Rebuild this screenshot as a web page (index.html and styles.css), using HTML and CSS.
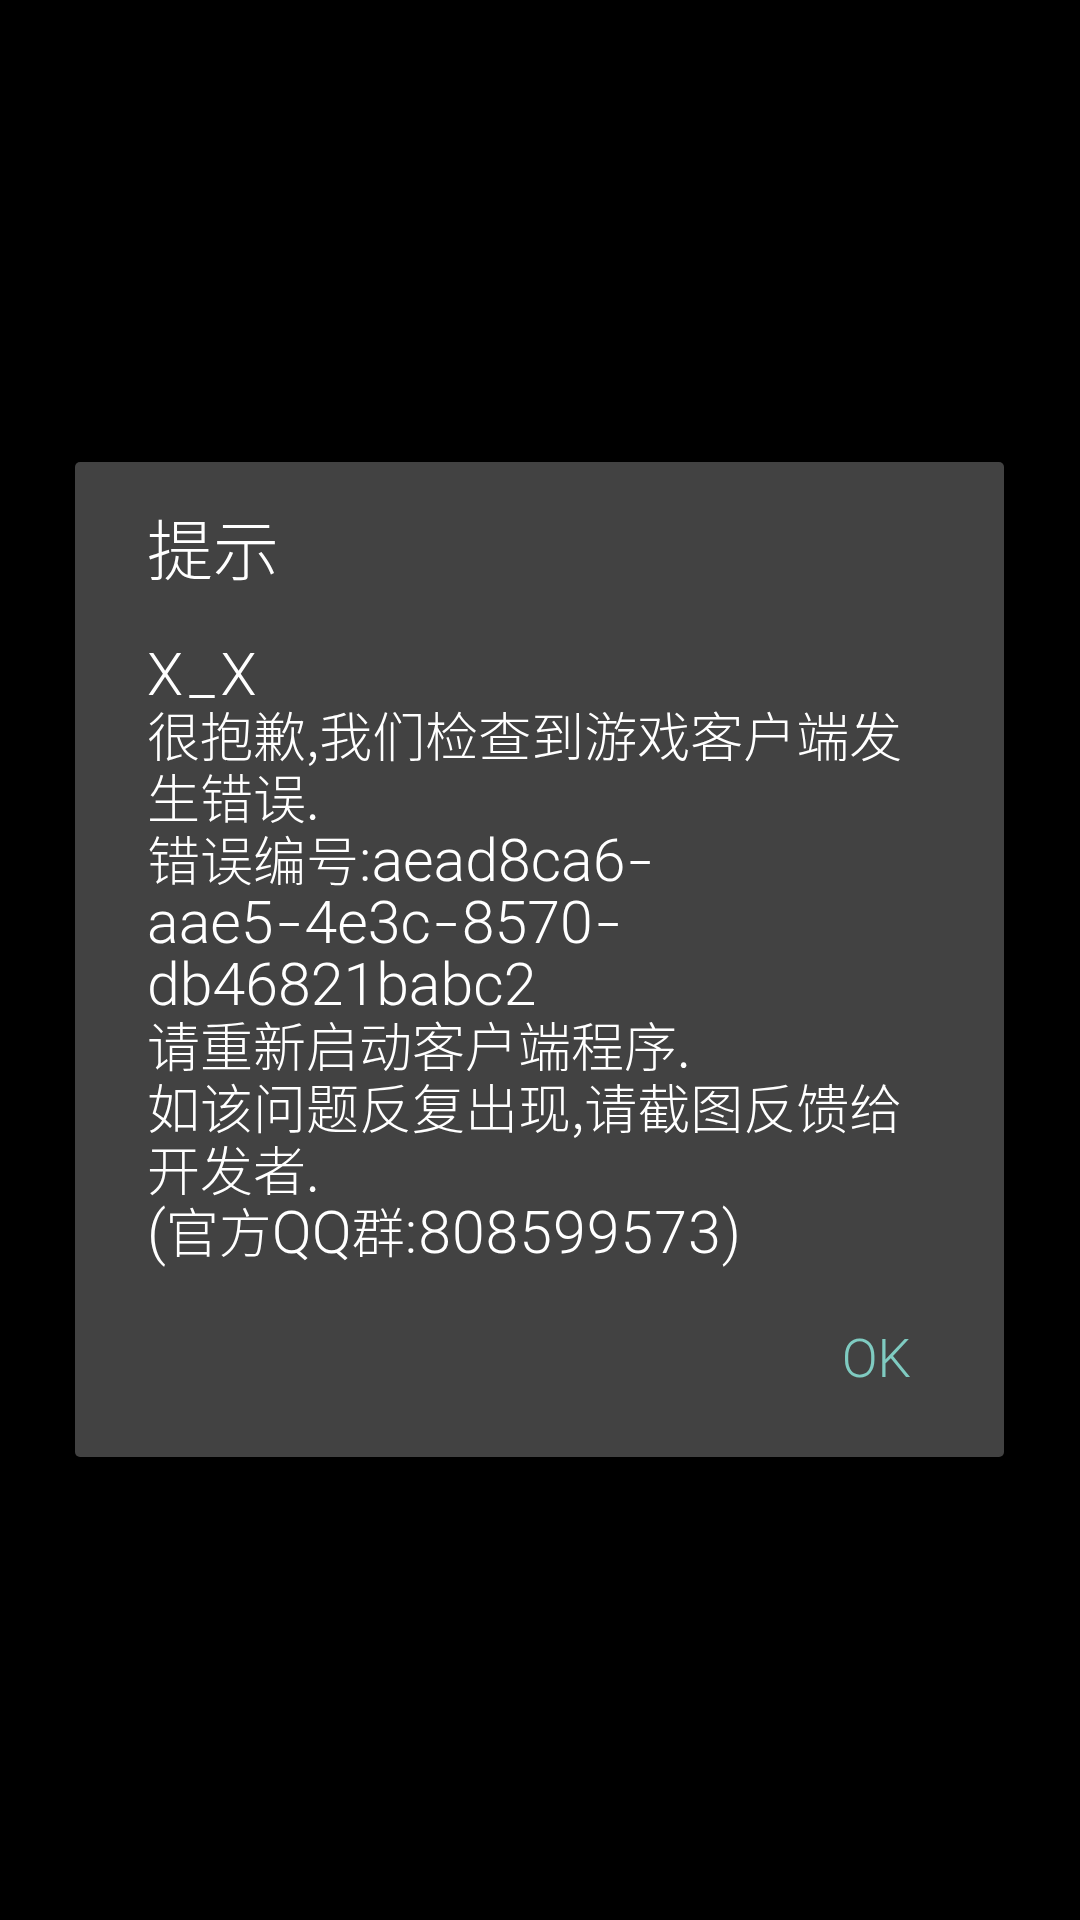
FILE: index.html
```html
<!DOCTYPE html>
<html lang="zh-CN">
<head>
<meta charset="utf-8">
<title>提示</title>
<link rel="stylesheet" href="styles.css">
</head>
<body>
<div class="screen">
  <div class="dialog">
    <h1 class="title">提示</h1>
    <p class="message"><span class="lat xx">X_X</span><br>很抱歉,我们检查到游戏客户端发<br>生错误.<br>错误编号<span class="lat">:aead8ca6<span class="dash">-</span></span><br><span class="lat">aae5<span class="dash">-</span>4e3c<span class="dash">-</span>8570<span class="dash">-</span></span><br><span class="lat">db46821babc2</span><br>请重新启动客户端程序.<br>如该问题反复出现,请截图反馈给<br>开发者.<br><span class="lat">(</span>官方<span class="lat">QQ</span>群<span class="lat wide">:808599573)</span></p>
    <div class="actions">
      <span class="btn">OK</span>
    </div>
  </div>
</div>
</body>
</html>
```
FILE: styles.css
```css
html, body {
  margin: 0;
  padding: 0;
  background: #000;
}
body {
  width: 1080px;
  height: 1920px;
  font-family: "Noto Sans CJK SC", "Noto Sans", sans-serif;
  font-weight: 300;
}
.screen {
  padding: 462px 76px 0 75px;
}
.dialog {
  box-sizing: border-box;
  height: 995px;
  background: #424242;
  border-radius: 5px;
  padding: 51px 93px 0 72px;
  display: flex;
  flex-direction: column;
}
.title {
  margin: 0;
  font-size: 66px;
  line-height: 66px;
  font-weight: 300;
  color: #fff;
}
.message {
  margin: 62px 0 0 0;
  font-size: 53px;
  line-height: 62px;
  color: #fff;
  white-space: nowrap;
}
.lat {
  font-family: Roboto, "Noto Sans", sans-serif;
  font-weight: 300;
  font-size: 59px;
  line-height: 50px;
}
.xx {
  letter-spacing: 6px;
}
.wide {
  letter-spacing: 1px;
}
.dash {
  display: inline-block;
  padding: 0 7px;
  transform: scaleX(1.4);
}
.actions {
  margin-top: 74px;
  display: flex;
  justify-content: flex-end;
}
.btn {
  font-family: Roboto, "Noto Sans", sans-serif;
  font-weight: 300;
  font-size: 53px;
  line-height: 48px;
  color: #7fcbc1;
}
```
